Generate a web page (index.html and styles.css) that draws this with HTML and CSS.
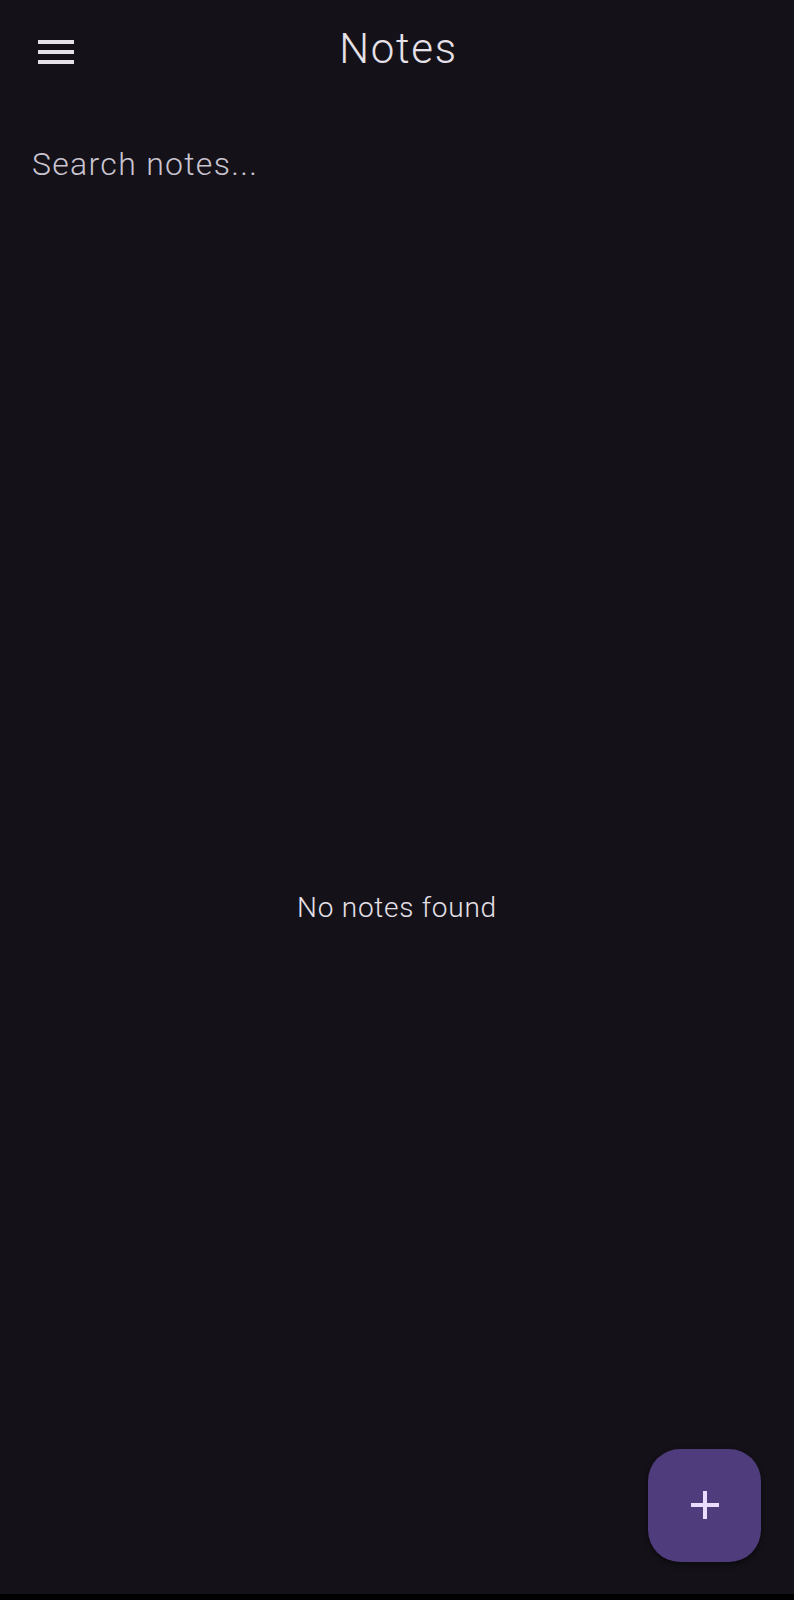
FILE: index.html
```html
<!DOCTYPE html>
<html lang="en">
<head>
<meta charset="utf-8">
<title>Notes</title>
<link rel="stylesheet" href="styles.css">
</head>
<body>
<div class="screen">
  <header class="app-bar">
    <button class="icon-btn" aria-label="Menu">
      <svg width="48" height="48" viewBox="0 0 24 24"><path d="M3 6h18v2H3zM3 11h18v2H3zM3 16h18v2H3z" fill="#E6E0E9"/></svg>
    </button>
    <h1 class="title">Notes</h1>
    <div class="spacer"></div>
  </header>
  <div class="search">
    <span class="search-hint">Search notes...</span>
  </div>
  <main class="content">
    <p class="empty">No notes found</p>
  </main>
  <button class="fab" aria-label="Add note">
    <svg width="48" height="48" viewBox="0 0 24 24"><path d="M19 13h-6v6h-2v-6H5v-2h6V5h2v6h6v2z" fill="#EADDFF"/></svg>
  </button>
</div>
<div class="nav-bar"></div>
</body>
</html>
```

FILE: styles.css
```css
* { box-sizing: border-box; }
html, body {
  margin: 0;
  padding: 0;
  background: #000;
}
body {
  width: 794px;
  height: 1600px;
  font-family: Roboto, "Noto Sans", sans-serif;
  overflow: hidden;
}
.screen {
  position: relative;
  height: 1594px;
  background: #141218;
  display: flex;
  flex-direction: column;
}
.nav-bar {
  height: 6px;
  background: #000;
}
.app-bar {
  height: 104px;
  display: grid;
  grid-template-columns: 1fr auto 1fr;
  align-items: center;
  padding: 0 32px;
}
.icon-btn {
  width: 48px;
  height: 48px;
  padding: 0;
  border: 0;
  background: none;
  display: flex;
}
.title {
  margin: 0 0 7px 3px;
  font-size: 42px;
  font-weight: 300;
  line-height: 56px;
  letter-spacing: 1.7px;
  color: #E6E0E9;
}
.search {
  height: 117px;
  padding: 36px 0 0 32px;
}
.search-hint {
  display: block;
  font-size: 32px;
  font-weight: 300;
  line-height: 48px;
  letter-spacing: 1.3px;
  color: #CAC4D0;
}
.content {
  flex: 1;
  display: flex;
  align-items: center;
  justify-content: center;
}
.empty {
  margin: 0;
  font-size: 28px;
  font-weight: 300;
  line-height: 40px;
  letter-spacing: 0.75px;
  color: #E6E0E9;
}
.fab {
  position: absolute;
  right: 33px;
  bottom: 32px;
  width: 113px;
  height: 113px;
  border: 0;
  padding: 0;
  border-radius: 32px;
  background: #4F3C7C;
  box-shadow: 0 3px 6px rgba(0,0,0,0.35), 0 1px 3px rgba(0,0,0,0.3);
  display: flex;
  align-items: center;
  justify-content: center;
}
.fab svg { margin-top: -1px; }
```
